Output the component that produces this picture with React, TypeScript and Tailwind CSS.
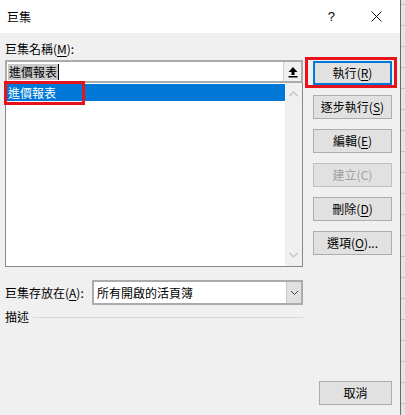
import React from "react";

const Btn = ({ label, k, rest, disabled, focus, className = "" }: { label: string; k: string; rest?: string; disabled?: boolean; focus?: boolean; className?: string }) => (
  <div
    className={`h-[24px] flex items-center justify-center bg-[#e1e1e1] text-[12px] leading-[14px] ${
      focus ? "border-2 border-[#0078d7]" : disabled ? "border border-[#bfbfbf]" : "border border-[#adadad]"
    } ${disabled ? "text-[#a0a0a0]" : "text-black"} ${className}`}
  >
    <span>
      {label}(<span className={disabled ? "" : "underline underline-offset-2"}>{k}</span>){rest}
    </span>
  </div>
);

export default function App() {
  const lines = Array.from({ length: 20 });
  return (
    <div
      className="flex w-[405px] h-[415px] overflow-hidden bg-[#e4e4e4] text-black"
      style={{ fontFamily: '"Noto Sans CJK TC", "Noto Sans", sans-serif' }}
    >
      <div className="relative w-[401px] h-full shrink-0 border-r border-[#6d6d6d] bg-[#f0f0f0] flex flex-col">
        {/* title bar */}
        <div className="h-[33px] shrink-0 bg-white flex items-center">
          <span className="ml-[7px] text-[12px] leading-[16px]">巨集</span>
          <span className="ml-auto mr-[36px] text-[13px] leading-[16px]" style={{ fontFamily: '"Liberation Sans", sans-serif' }}>?</span>
          <svg width="11" height="11" viewBox="0 0 11 11" className="mr-[18px]">
            <path d="M0.5 0.5 L10.5 10.5 M10.5 0.5 L0.5 10.5" stroke="#111" strokeWidth="1" />
          </svg>
        </div>

        {/* body */}
        <div className="flex flex-1 pl-[5px]">
          {/* left column */}
          <div className="w-[298px] flex flex-col">
            <div className="mt-[8px] h-[16px] text-[12px] leading-[16px]">
              巨集名稱(<span className="underline underline-offset-2">M</span>):
            </div>
            <div className="mt-[3px] h-[23px] border-2 border-[#ababab] bg-white flex items-center">
              <div className="flex items-center ml-[1px] flex-1">
                <span className="bg-[#c9c9c9] text-[12px] leading-[16px] px-[1px]">進價報表</span>
                <span className="w-[1px] h-[16px] bg-black"></span>
              </div>
              <div className="w-[18px] h-[19px] bg-[#f0f0f0] border-l border-[#d0d0d0] flex items-center justify-center">
                <svg width="10" height="12" viewBox="0 0 10 12">
                  <path d="M5 1 L9.5 6 L6.5 6 L6.5 9 L3.5 9 L3.5 6 L0.5 6 Z" fill="#000" />
                  <rect x="0.5" y="10" width="9" height="1.5" fill="#000" />
                </svg>
              </div>
            </div>
            <div className="h-[184px] border-x border-b border-[#828790] bg-white flex">
              <div className="flex-1 pt-[1px]">
                <div className="h-[17px] bg-[#0078d7] text-white text-[12px] leading-[17px] pl-[2px]">進價報表</div>
              </div>
              <div className="w-[17px] bg-[#f0f0f0] flex flex-col items-center justify-between py-[8px]">
                <svg width="9" height="6" viewBox="0 0 9 6">
                  <path d="M0.5 5 L4.5 1 L8.5 5" stroke="#c2c2c2" strokeWidth="1.2" fill="none" />
                </svg>
                <svg width="9" height="6" viewBox="0 0 9 6">
                  <path d="M0.5 1 L4.5 5 L8.5 1" stroke="#c2c2c2" strokeWidth="1.2" fill="none" />
                </svg>
              </div>
            </div>
            <div className="mt-[13px] h-[25px] flex items-center">
              <span className="w-[87px] text-[12px] leading-[16px]">
                巨集存放在(<span className="underline underline-offset-2">A</span>):
              </span>
              <div className="flex-1 h-[25px] border-2 border-[#ababab] bg-white flex items-center">
                <span className="flex-1 pl-[3px] text-[12px] leading-[16px]">所有開啟的活頁簿</span>
                <div className="w-[15px] h-full bg-[#e1e1e1] border-l border-[#c8c8c8] flex items-center justify-center">
                  <svg width="9" height="6" viewBox="0 0 9 6">
                    <path d="M1 1 L4.5 4.5 L8 1" stroke="#444" strokeWidth="1" fill="none" />
                  </svg>
                </div>
              </div>
            </div>
            <div className="mt-[5px] h-[14px] flex items-center">
              <span className="text-[12px] leading-[14px]">描述</span>
              <div className="ml-[4px] flex-1 h-[1px] bg-[#d8d8d8]"></div>
            </div>
          </div>

          {/* right column */}
          <div className="ml-[10px] w-[79px] flex flex-col pb-[10px]">
            <div className="mt-[28px] flex flex-col gap-[10px]">
              <Btn label="執行" k="R" focus />
              <Btn label="逐步執行" k="S" />
              <Btn label="編輯" k="E" />
              <Btn label="建立" k="C" disabled />
              <Btn label="刪除" k="D" />
              <Btn label="選項" k="O" rest="..." />
            </div>
            <div className="flex-1"></div>
            <div className="self-end w-[73px] h-[24px] flex items-center justify-center bg-[#e1e1e1] border border-[#adadad] text-[12px] leading-[14px]">
              取消
            </div>
          </div>
        </div>

        {/* red highlight boxes */}
        <div className="absolute left-[4px] top-[81px] w-[81px] h-[24px] border-[3px] border-[#e8121c]"></div>
        <div className="absolute left-[305px] top-[57px] w-[92px] h-[31px] border-[3px] border-[#e8121c]"></div>
      </div>

      {/* spreadsheet strip behind */}
      <div className="flex-1 flex flex-col pt-[4px]">
        {lines.map((_, i) => (
          <div key={i} className="h-[21px] shrink-0 border-t border-[#c6c6c6]"></div>
        ))}
      </div>
    </div>
  );
}
